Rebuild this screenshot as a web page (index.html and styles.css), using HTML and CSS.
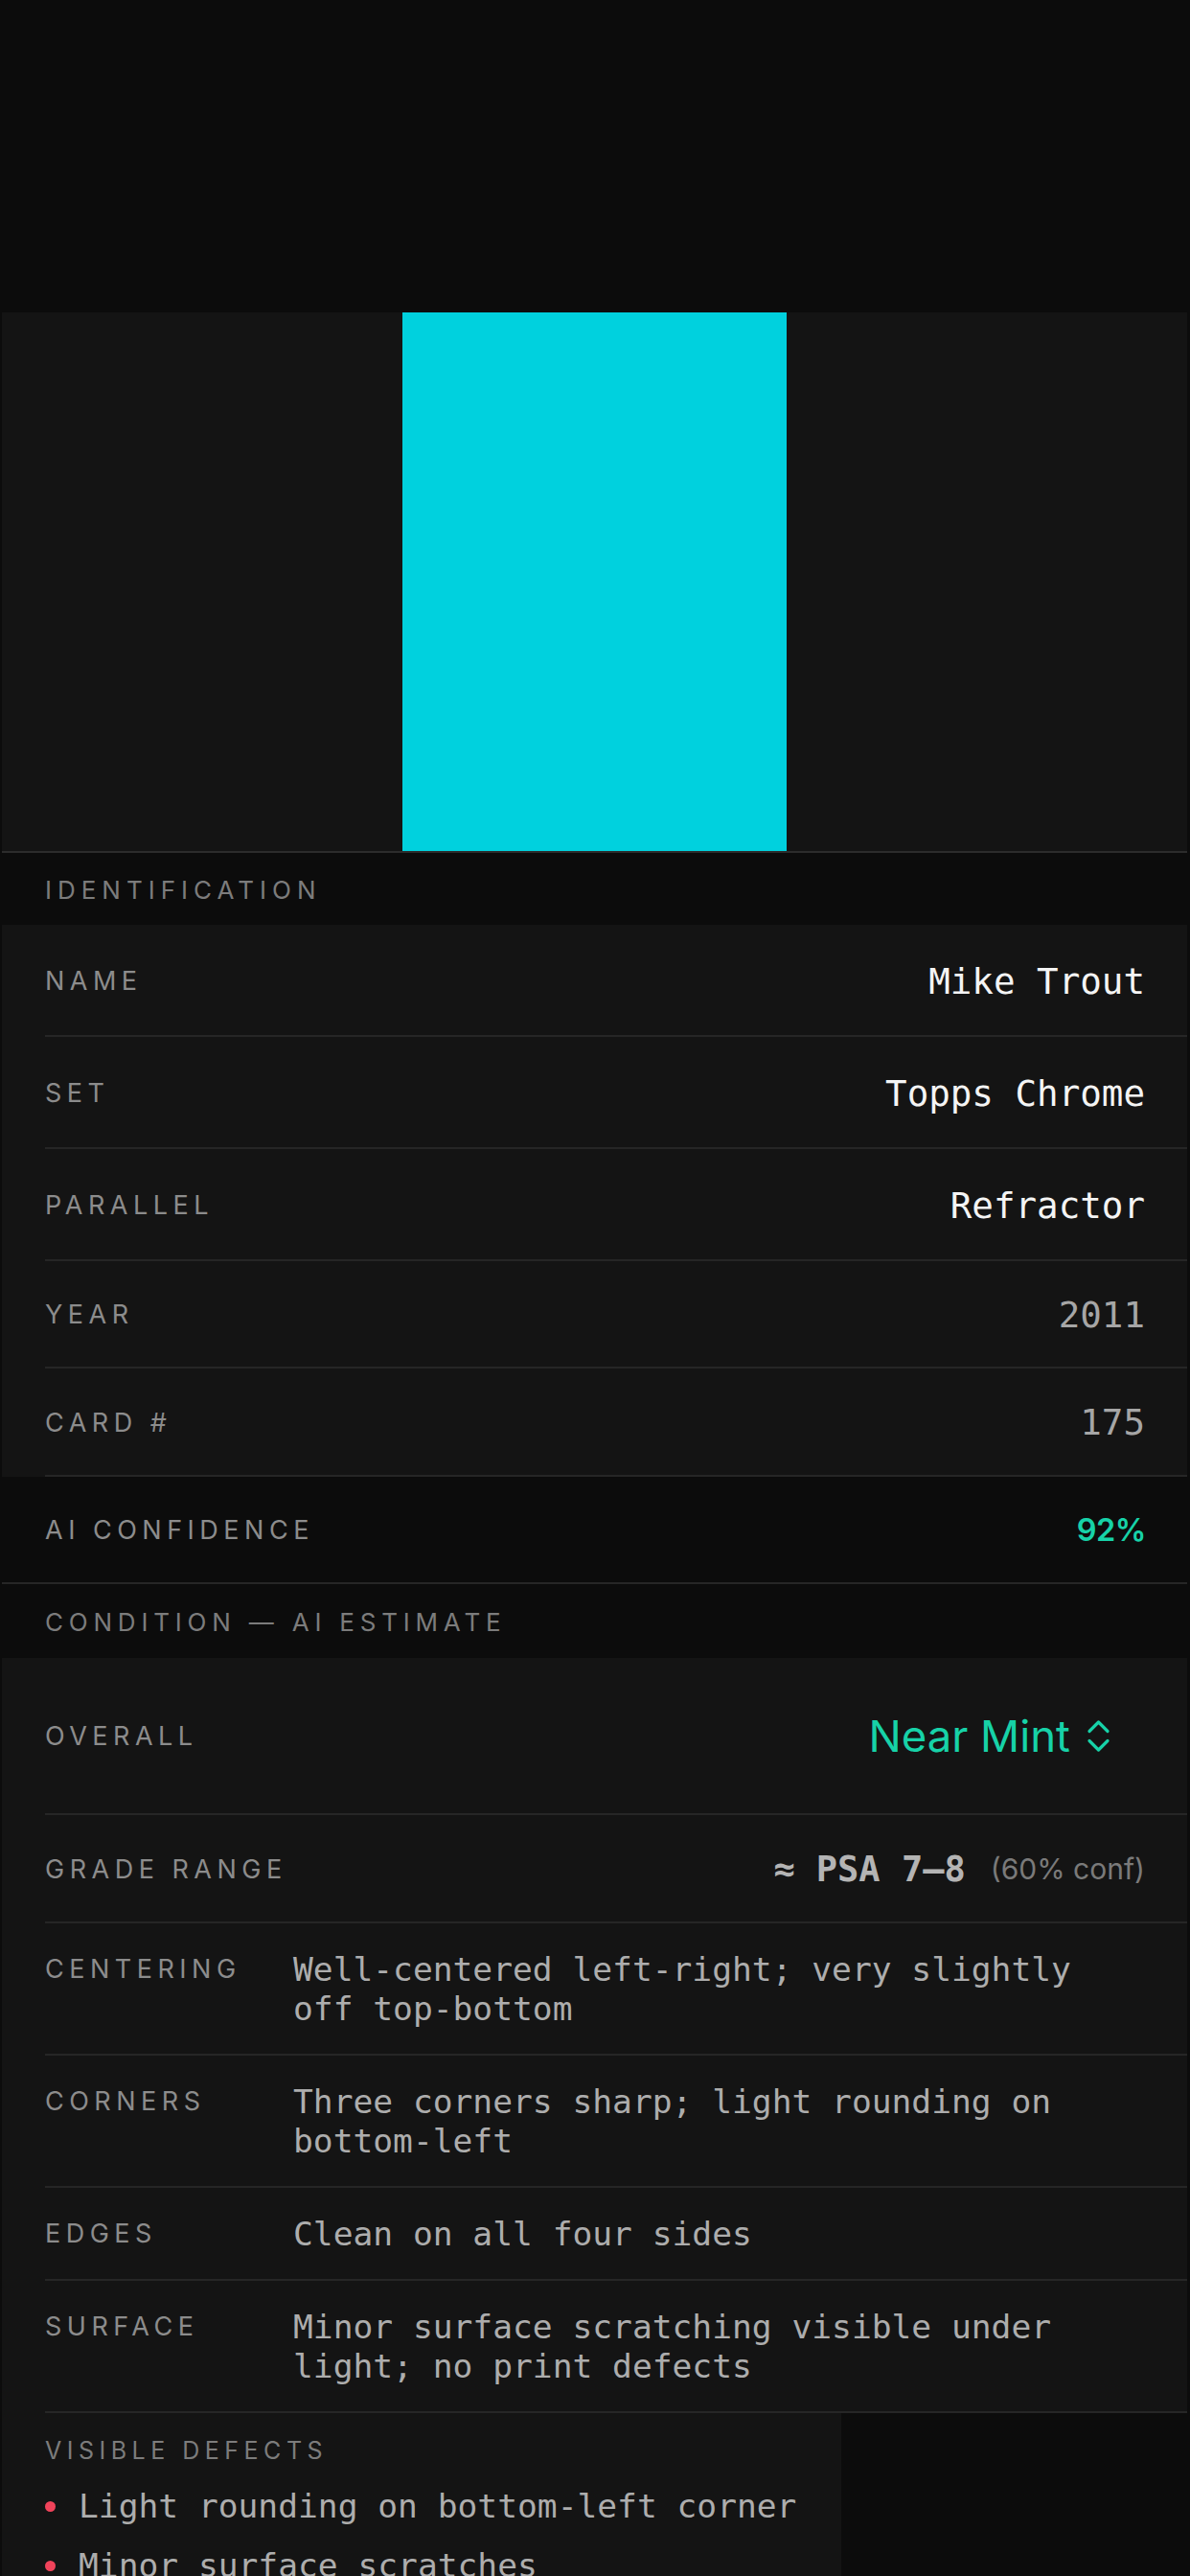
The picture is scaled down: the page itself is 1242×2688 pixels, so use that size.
FILE: index.html
```html
<!DOCTYPE html>
<html lang="en">
<head>
<meta charset="utf-8">
<title>Card Details</title>
<link rel="stylesheet" href="styles.css">
</head>
<body>
<div class="screen">
  <div class="topbar"></div>

  <div class="hero">
    <div class="card-art"></div>
  </div>

  <div class="section-header">Identification</div>
  <div class="group">
    <div class="row row-field"><span class="label">Name</span><span class="value value-strong">Mike Trout</span></div>
    <div class="row row-field"><span class="label">Set</span><span class="value value-strong">Topps Chrome</span></div>
    <div class="row row-field"><span class="label">Parallel</span><span class="value value-strong">Refractor</span></div>
    <div class="row row-static"><span class="label">Year</span><span class="value value-muted">2011</span></div>
    <div class="row row-static row-last"><span class="label">Card #</span><span class="value value-muted">175</span></div>
  </div>
  <div class="row-plain"><span class="label">AI Confidence</span><span class="confidence">92%</span></div>

  <div class="section-header section-header-2">Condition — AI Estimate</div>
  <div class="group">
    <div class="row row-picker">
      <span class="label">Overall</span>
      <span class="picker">
        <span class="picker-text">Near Mint</span>
        <svg class="picker-icon" width="25" height="35" viewBox="0 0 25 35" aria-hidden="true">
          <path d="M3 12.5 L12.5 3 L22 12.5" fill="none" stroke="currentColor" stroke-width="3.2" stroke-linecap="round" stroke-linejoin="round"/>
          <path d="M3 22.5 L12.5 32 L22 22.5" fill="none" stroke="currentColor" stroke-width="3.2" stroke-linecap="round" stroke-linejoin="round"/>
        </svg>
      </span>
    </div>
    <div class="row row-grade">
      <span class="label">Grade Range</span>
      <span class="grade"><span class="grade-main">≈ PSA 7–8</span><span class="grade-conf">(60% conf)</span></span>
    </div>
    <div class="row row-desc"><span class="label">Centering</span><span class="desc">Well-centered left-right; very slightly off top-bottom</span></div>
    <div class="row row-desc"><span class="label">Corners</span><span class="desc">Three corners sharp; light rounding on bottom-left</span></div>
    <div class="row row-desc"><span class="label">Edges</span><span class="desc">Clean on all four sides</span></div>
    <div class="row row-desc"><span class="label">Surface</span><span class="desc">Minor surface scratching visible under light; no print defects</span></div>
  </div>

  <div class="defects">
    <div class="defects-title">Visible Defects</div>
    <ul class="defect-list">
      <li class="defect"><span class="dot"></span><span class="defect-text">Light rounding on bottom-left corner</span></li>
      <li class="defect"><span class="dot"></span><span class="defect-text">Minor surface scratches</span></li>
    </ul>
  </div>
</div>
</body>
</html>
```

FILE: styles.css
```css
* { box-sizing: border-box; }

html, body {
  margin: 0;
  padding: 0;
  background: #0c0c0c;
}

body {
  font-family: "Inter", "Noto Sans", "Liberation Sans", sans-serif;
  color: #f2f2f2;
  overflow: hidden;
}

.screen {
  width: 1242px;
  min-height: 2688px;
}

.topbar {
  height: 326px;
}

.hero {
  margin: 0 3px 0 2px;
  height: 564px;
  background: #141414;
  border-bottom: 2px solid #2c2c2c;
  display: flex;
  justify-content: center;
}

.card-art {
  width: 401px;
  height: 562px;
  background: #00d1de;
}

.section-header {
  height: 75px;
  padding-left: 47px;
  padding-top: 1px;
  display: flex;
  align-items: center;
  font-size: 26px;
  letter-spacing: 6px;
  text-transform: uppercase;
  color: #7c7c7c;
}

.section-header-2 {
  height: 77px;
  letter-spacing: 5.8px;
}

.group {
  margin: 0 3px 0 2px;
  background: #141414;
}

.row {
  margin-left: 45px;
  padding-right: 44px;
  border-bottom: 2px solid #262626;
  display: flex;
  align-items: center;
  justify-content: space-between;
}

.label {
  font-size: 27px;
  letter-spacing: 5.5px;
  text-transform: uppercase;
  color: #8c8c8c;
  white-space: nowrap;
}

.row-field { height: 117px; padding-top: 2px; }
.row-static { height: 112px; padding-top: 1px; }
.row-last { height: 113px; }

.value {
  font-family: "DejaVu Sans Mono", "Liberation Mono", monospace;
  font-size: 37.5px;
}

.value-strong { color: #f4f4f4; }
.value-muted { color: #a6a6a6; }

.row-plain {
  margin: 0 3px 0 2px;
  height: 112px;
  padding: 1px 43px 0 45px;
  border-bottom: 2px solid #262626;
  display: flex;
  align-items: center;
  justify-content: space-between;
}

.confidence {
  font-size: 32.5px;
  font-weight: 600;
  color: #17d2a8;
  letter-spacing: -0.5px;
}

.row-picker { height: 164px; padding-top: 1px; }

.picker {
  display: flex;
  align-items: center;
  gap: 17px;
  margin-right: 36px;
  color: #17d2a8;
}

.picker-text {
  font-size: 45.5px;
  font-weight: 400;
}

.picker-icon { display: block; }

.row-grade { height: 113px; padding-top: 1px; }

.grade {
  display: flex;
  align-items: center;
  gap: 26px;
}

.grade-main {
  font-family: "DejaVu Sans Mono", "Liberation Mono", monospace;
  font-weight: 700;
  font-size: 37px;
  color: #b4b4b4;
}

.grade-conf {
  font-size: 30px;
  color: #7a7a7a;
}

.row-desc {
  display: grid;
  grid-template-columns: 259px 1fr;
  align-items: start;
  padding-top: 28px;
  padding-bottom: 26px;
}

.row-desc .label {
  line-height: 34px;
  padding-top: 3px;
}

.desc {
  font-family: "DejaVu Sans Mono", "Liberation Mono", monospace;
  font-size: 34.6px;
  line-height: 41px;
  color: #adadad;
}

.defects {
  width: fit-content;
  margin-left: 2px;
  background: #141414;
  padding: 24px 47px 40px 45px;
}

.defects-title {
  font-size: 25px;
  letter-spacing: 5.5px;
  text-transform: uppercase;
  color: #7c7c7c;
  line-height: 31px;
  margin-bottom: 22px;
}

.defect-list {
  list-style: none;
  margin: 0;
  padding: 0;
  display: flex;
  flex-direction: column;
  gap: 21px;
}

.defect {
  display: flex;
  align-items: center;
  gap: 24px;
}

.dot {
  width: 11px;
  height: 11px;
  border-radius: 50%;
  background: #f0435a;
  flex: none;
}

.defect-text {
  font-family: "DejaVu Sans Mono", "Liberation Mono", monospace;
  font-size: 34.6px;
  line-height: 41px;
  color: #adadad;
}
```
